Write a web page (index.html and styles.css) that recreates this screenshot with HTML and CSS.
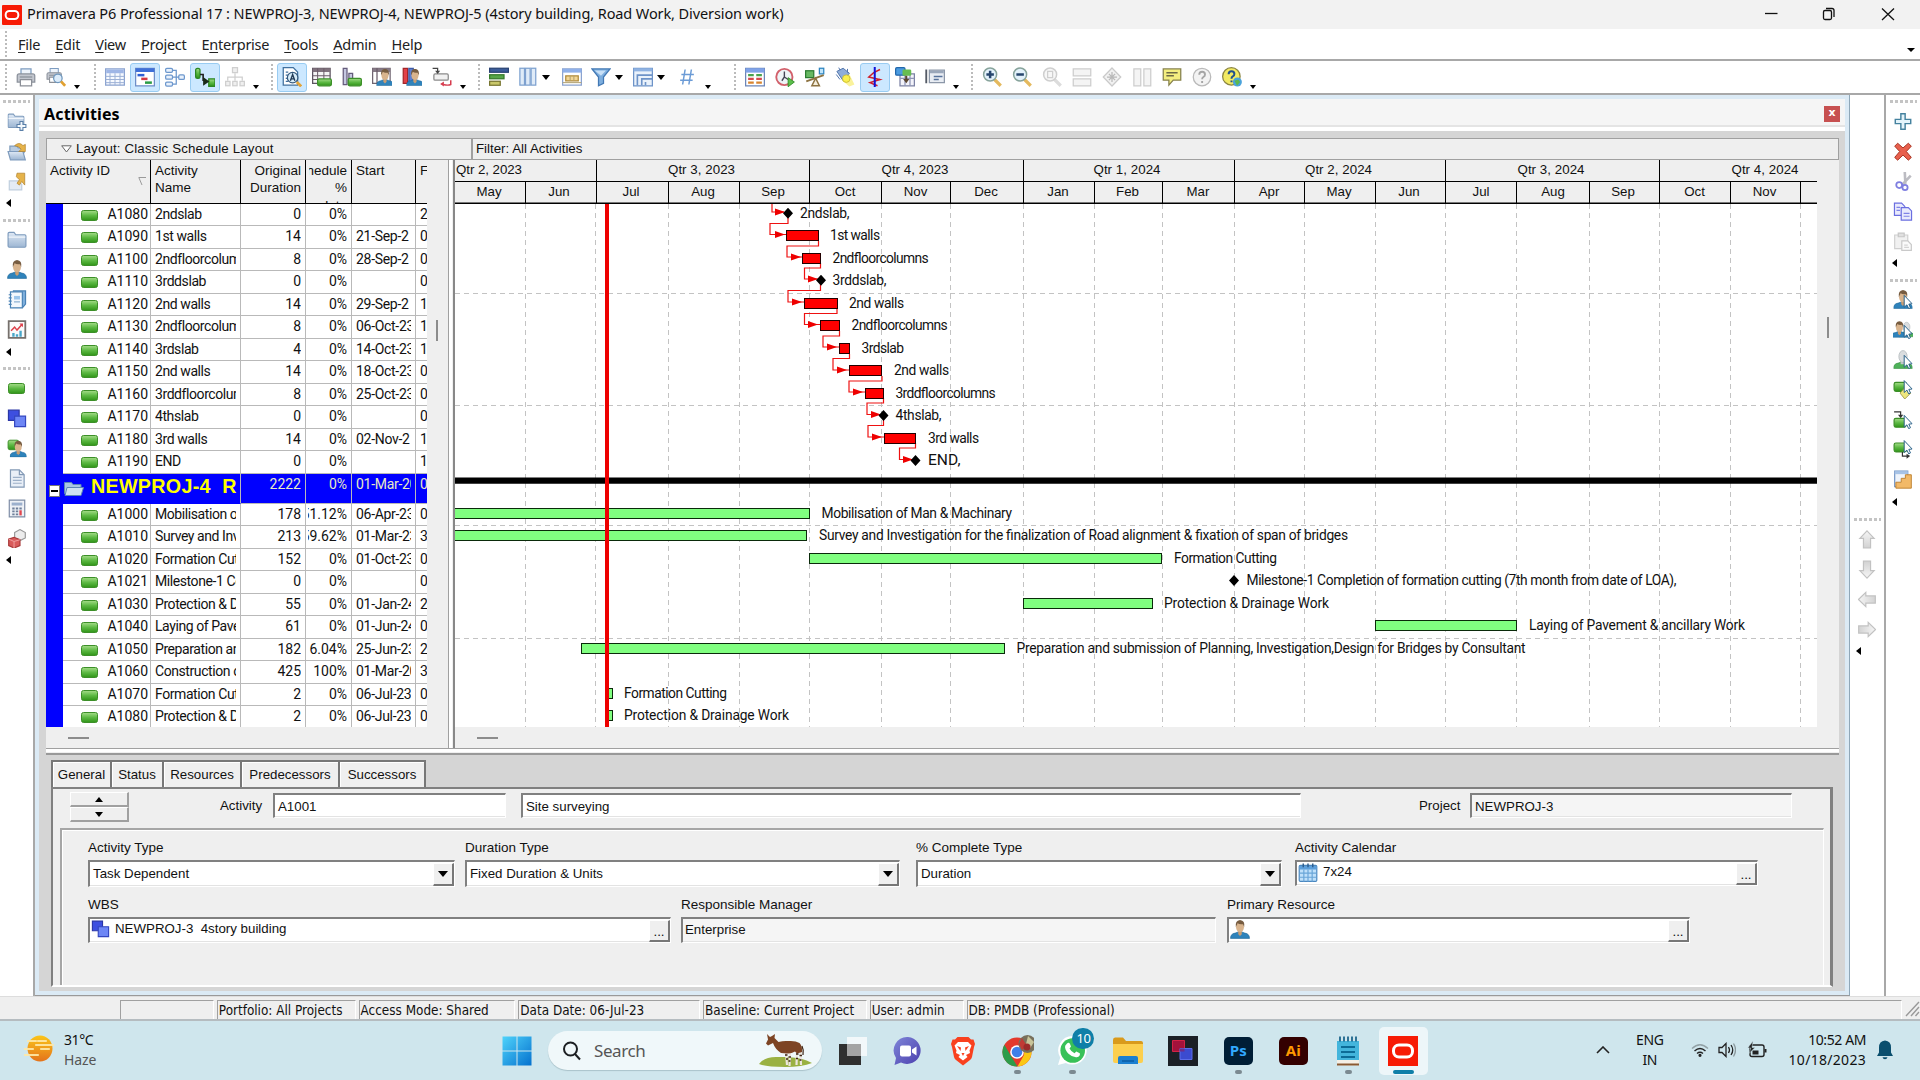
FILE: index.html
```html
<!DOCTYPE html>
<html lang="en">
<head>
<meta charset="utf-8">
<title>Primavera P6 Professional 17</title>
<link rel="stylesheet" href="styles.css">
</head>
<body>
<svg class="defs" width="0" height="0" aria-hidden="true">
<defs>
<linearGradient id="g-green" x1="0" y1="0" x2="0" y2="1"><stop offset="0" stop-color="#a6dd8a"/><stop offset=".5" stop-color="#5db944"/><stop offset="1" stop-color="#2f9417"/></linearGradient>
<linearGradient id="g-fold" x1="0" y1="0" x2="0" y2="1"><stop offset="0" stop-color="#dfe9f5"/><stop offset="1" stop-color="#9db6d3"/></linearGradient>
<linearGradient id="g-gray" x1="0" y1="0" x2="0" y2="1"><stop offset="0" stop-color="#f6f6f6"/><stop offset="1" stop-color="#d2d2d2"/></linearGradient>
<linearGradient id="g-win" x1="0" y1="0" x2="1" y2="1"><stop offset="0" stop-color="#4fd3fb"/><stop offset="1" stop-color="#0571ce"/></linearGradient>
<linearGradient id="g-sun" x1="0" y1="0" x2="0" y2="1"><stop offset="0" stop-color="#fbc51a"/><stop offset="1" stop-color="#e4731b"/></linearGradient>
<linearGradient id="g-chat" x1="0" y1="0" x2="1" y2="1"><stop offset="0" stop-color="#7f86d8"/><stop offset="1" stop-color="#4b3fae"/></linearGradient>
</defs>
<symbol id="i-act" viewBox="0 0 17 11"><rect x=".5" y=".5" width="16" height="10" rx="2" fill="url(#g-green)" stroke="#3c8f28"/></symbol>
<symbol id="i-head" viewBox="0 0 16 16"><path d="M0 15.500q0-4 4-4.500l2.500-1h3l2.500 1q4 .5 4 4.500z" fill="#2f83bb" stroke="#1d6697" stroke-width=".5"/><path d="M6.500 9h3v3l-1.500 1.500-1.500-1.500z" fill="#c99d72"/><ellipse cx="8" cy="6" rx="3.300" ry="4.300" fill="#d9b48d"/><path d="M4.500 6q-.8-5.500 3.500-6 4.500.5 3.500 6l-1-2.500q-3 .5-4.500-.8z" fill="#775c40"/></symbol>
<symbol id="i-ghost" viewBox="0 0 16 16"><path d="M0 15.500q0-4 4-4.500l2.500-1h3l2.500 1q4 .5 4 4.500z" fill="#4fb25a" stroke="#2d8a3a" stroke-width=".5"/><path d="M6 9h4v3H6z" fill="#c3c8cb"/><ellipse cx="8" cy="5.500" rx="3.500" ry="5" fill="#dadddf" stroke="#aeb4b8" stroke-width=".6"/></symbol>
<symbol id="i-cursor" viewBox="0 0 16 16"><path d="M9 4.500v10l2.300-2 1.500 3.200 1.500-.8-1.400-3 2.800-.3z" fill="#fff" stroke="#235d86" stroke-width=".8"/></symbol>
<symbol id="i-print" viewBox="0 0 16 16"><path d="M4 1.500h8V7H4z" fill="#eef4fb" stroke="#7d9cc0"/><path d="M1 7q0-1.500 1.500-1.500h11Q15 5.500 15 7v5H1z" fill="#c2c6ce" stroke="#8b919b"/><path d="M3.500 10h9v5h-9z" fill="#fff" stroke="#8b8f97"/><path d="M3 8h10" stroke="#8a9098"/></symbol>
<symbol id="i-preview" viewBox="0 0 16 16"><g transform="scale(.82)"><use href="#i-print" width="16" height="16"/></g><circle cx="9.500" cy="9" r="3.400" fill="#dcecfa" stroke="#6f97bd"/><path d="M12 11.500l3.300 3.500" stroke="#e0a030" stroke-width="2.200"/></symbol>
<symbol id="i-grid" viewBox="0 0 16 16"><path d="M.5 1.500h15v13H.5z" fill="#f7faff" stroke="#8ba3d0"/><path d="M1 2h14v3H1z" fill="#9fb6e6"/><path d="M.5 7.500h15M.5 10h15M.5 12.500h15M4 5v9.500M8 5v9.500M12 5v9.500" stroke="#9db1d6" stroke-width=".8"/></symbol>
<symbol id="i-gantt" viewBox="0 0 16 16"><path d="M.5 1h15v14H.5z" fill="#fff" stroke="#6f8ec8"/><path d="M.5 1h15v3H.5z" fill="#3f70d8"/><path d="M2 6.500h5.500" stroke="#2d5fd3" stroke-width="2"/><path d="M5 9.500h5" stroke="#d33845" stroke-width="2"/><path d="M8 12.500h5.500" stroke="#2b9c45" stroke-width="2"/></symbol>
<symbol id="i-net" viewBox="0 0 16 16"><g fill="#e9f1fb" stroke="#6c97cd"><rect x=".5" y="1" width="5.500" height="3.200" rx="1"/><rect x=".5" y="6.500" width="5.500" height="3.200" rx="1"/><rect x=".5" y="12" width="5.500" height="3.200" rx="1"/><rect x="11" y="6.300" width="4.500" height="3.600" rx="1"/></g><path d="M6 2.600h3v5.500h2M6 8.100h5M6 13.600h3V8" fill="none" stroke="#6c97cd"/></symbol>
<symbol id="i-link" viewBox="0 0 16 16"><rect x=".5" y="1" width="3.500" height="8" rx="1.500" fill="url(#g-green)" stroke="#2c8622"/><rect x="11" y="9.500" width="5" height="6" fill="url(#g-green)" stroke="#2c8622"/><path d="M4 6h2.500v4.500H8" fill="none" stroke="#222" stroke-width="1.300"/><path d="M6.500 8l5 3.500-5 3.500z" fill="#1a2a1a"/></symbol>
<symbol id="i-tree" viewBox="0 0 16 16"><g fill="#efefef" stroke="#cfcfcf"><rect x="6" y=".5" width="4" height="4"/><rect x=".5" y="11.500" width="3.500" height="3.500"/><rect x="6.200" y="11.500" width="3.500" height="3.500"/><rect x="12" y="11.500" width="3.500" height="3.500"/></g><path d="M8 5v6M2.200 11V8h11.600v3" fill="none" stroke="#cfcfcf"/></symbol>
<symbol id="i-docfind" viewBox="0 0 16 16"><path d="M1 .5h8l3.500 3.500v10.500H1z" fill="#fff" stroke="#40709f"/><path d="M3 4h2M3 6.500h2M3 9h2M3 11.500h2" stroke="#40709f"/><circle cx="8.500" cy="8.500" r="4.200" fill="#d8edf9" stroke="#365a7e"/><path d="M6.700 11l1.800-5 1.800 5M7.300 9.500h2.400" fill="none" stroke="#223a55" stroke-width="1.100"/><path d="M11.800 12l3.500 3.500" stroke="#e2a43a" stroke-width="2.200"/></symbol>
<symbol id="i-tbl-green" viewBox="0 0 16 16"><path d="M.5 1h14v12H.5z" fill="#f5f5f5" stroke="#5c5460"/><path d="M.5 1h14v3H.5z" fill="#80727d"/><path d="M4.500 1v12M9.500 1v12M.5 7h14M.5 10h14" stroke="#6b5c68" stroke-width=".8"/><rect x="4.500" y="9.500" width="11" height="5.500" rx="1.200" fill="url(#g-green)" stroke="#3c8f28"/></symbol>
<symbol id="i-bars-green" viewBox="0 0 16 16"><path d="M1 1h3v13H1zM5.500 5h3v9h-3z" fill="#c5c7e0" stroke="#655c7c"/><rect x="5" y="9" width="10.500" height="6" rx="1.200" fill="url(#g-green)" stroke="#3c8f28"/></symbol>
<symbol id="i-tbl-head" viewBox="0 0 16 16"><path d="M.5 1h14v12H.5z" fill="#fff" stroke="#6f6470"/><path d="M.5 1h14v3H.5z" fill="#867a86"/><path d="M4 1v12" stroke="#6b5c68"/><g transform="translate(3.500 1.500) scale(.86)"><use href="#i-head" width="16" height="16"/></g></symbol>
<symbol id="i-bar-head" viewBox="0 0 16 16"><path d="M1 1h3.500v12H1z" fill="#e24148" stroke="#a32529"/><path d="M5.500 1h3.500v12H5.500z" fill="#5f80cf" stroke="#3d5aa6"/><g transform="translate(3.500 1.500) scale(.86)"><use href="#i-head" width="16" height="16"/></g></symbol>
<symbol id="i-relate" viewBox="0 0 16 16"><rect x="1.500" y="5.500" width="11.500" height="5" rx="1" fill="#f1f1f1" stroke="#8a8a8a"/><path d="M.5 1h4v3" fill="none" stroke="#444"/><path d="M2.500 3h4L4.500 5.500z" fill="#444"/><path d="M15 10.500v3.500q-2 1-6 0" fill="none" stroke="#d63c4e" stroke-width="1.200"/><path d="M6.500 13.500l3-2v4z" fill="#d63c4e"/></symbol>
<symbol id="i-barlist" viewBox="0 0 16 16"><rect x=".5" y="1" width="15" height="3.200" fill="#3c5c99" stroke="#2a4273"/><rect x=".5" y="6.200" width="11.500" height="3.200" fill="#57a548" stroke="#367a2b"/><rect x=".5" y="11.400" width="8.500" height="3.200" fill="#c9c76a" stroke="#77752f"/></symbol>
<symbol id="i-cols" viewBox="0 0 16 16"><g fill="#dfebf8" stroke="#7ea1cf"><rect x="1.500" y="1" width="3.700" height="13.500"/><rect x="6" y="1" width="3.700" height="13.500"/><rect x="10.500" y="1" width="3.700" height="13.500"/></g></symbol>
<symbol id="i-window" viewBox="0 0 16 16"><path d="M.5 1.500h15v13H.5z" fill="#fff" stroke="#8ba3d0"/><path d="M.5 1.500h15v3H.5z" fill="#8fb0ea"/><path d="M3 7h10v4H3z" fill="#f3d695" stroke="#b08b3c"/><path d="M6.500 7v4M9.500 7v4M.5 12.500h15" stroke="#b0a070" stroke-width=".8"/></symbol>
<symbol id="i-funnel" viewBox="0 0 16 16"><path d="M.8 1.500h14.400L10 8v5l-4 2V8z" fill="#7daede" stroke="#4278b4"/><path d="M3 2.700h9L8 7z" fill="#c8e0f7"/></symbol>
<symbol id="i-group" viewBox="0 0 16 16"><path d="M.5 1h15v14H.5z" fill="#eaf2fb" stroke="#6d93c8"/><path d="M.5 1h15v2.500H.5z" fill="#8fb2e2"/><path d="M3.500 14.500v-8h12M7 14.500v-5h8.500M10 14.500V12" fill="none" stroke="#6d93c8" stroke-width="1.300"/></symbol>
<symbol id="i-hash" viewBox="0 0 16 16"><path d="M6.500 2l-2 12M11.500 2l-2 12M3.500 6h10M2.500 10.500h10" stroke="#6b9bd6" stroke-width="1.200"/></symbol>
<symbol id="i-sheet" viewBox="0 0 16 16"><path d="M.5 1h15v14H.5z" fill="#fff" stroke="#6d86b8"/><path d="M.5 1h15v3.500H.5z" fill="#7fa2e8"/><path d="M2.500 6.500h4.500M9 6.500h4.500" stroke="#49a24f" stroke-width="1.800"/><path d="M2.500 9.500h4.500M9 9.500h4.500" stroke="#d5484e" stroke-width="1.800"/><path d="M2.500 12.500h4.500M9 12.500h4.500" stroke="#d8842f" stroke-width="1.800"/></symbol>
<symbol id="i-clock" viewBox="0 0 16 16"><circle cx="7.500" cy="8" r="6.500" fill="#eef4f7" stroke="#d2606b" stroke-width="1.500"/><path d="M7.500 3.500V8l-2 3M7.500 8l3 2" fill="none" stroke="#445" stroke-width="1.100"/><path d="M10.500 8.500l5 3.500-5 3.800z" fill="#5cbf4c" stroke="#2f8a25" stroke-width=".7"/></symbol>
<symbol id="i-level" viewBox="0 0 16 16"><rect x=".5" y="3" width="6.500" height="5.500" fill="#67b862" stroke="#2c7c31"/><rect x="11.500" y="1" width="3.500" height="4.500" fill="#bfe4fa" stroke="#2d84c0"/><path d="M1 11.500l14-5" stroke="#8d7342" stroke-width="1.500"/><path d="M8.500 9l-3 6h6z" fill="#f4eedc" stroke="#8d7342" stroke-width="1.200"/></symbol>
<symbol id="i-spot" viewBox="0 0 16 16"><path d="M1.500 3.500l5-2.500 5 4-5 6z" fill="#8fadd8" stroke="#5477ad" stroke-width=".8"/><path d="M3 .5l1 2M1 6l3 4M10 1.500v3" stroke="#5477ad" stroke-width=".8"/><path d="M6 11l5.500-5.500 4 8.500-4 1.500z" fill="#faf29b"/><circle cx="9" cy="9.300" r="3" fill="#fbf04e" stroke="#c9bb32" stroke-width=".7"/></symbol>
<symbol id="i-progress" viewBox="0 0 16 16"><path d="M12 2L7 4.500 3 8l9 2-8 2.500 6 2.500" fill="none" stroke="#d0202c" stroke-width="1.200"/><path d="M7.800 0v16" stroke="#1212d8" stroke-width="1.600"/></symbol>
<symbol id="i-update" viewBox="0 0 16 16"><path d="M4 5.500h11.500V15H4z" fill="#f3f3fa" stroke="#7c82a4"/><path d="M4 9h11.500M8 5.500V15M12 5.500V15" stroke="#8f95b6"/><rect x=".5" y=".5" width="7.500" height="6" rx="1" fill="#4b9be0" stroke="#2267ab"/><rect x="6" y="2" width="7" height="5" rx="1" fill="#67bd51"/><path d="M9 7v3" stroke="#5b4730" stroke-width="1.600"/><path d="M6.500 9.500h5L9 13z" fill="#5b4730"/></symbol>
<symbol id="i-bartext" viewBox="0 0 16 16"><path d="M1 2v11" stroke="#555b66" stroke-width="1.500"/><path d="M3.500 2.500h12v10h-12z" fill="#e9edf3" stroke="#8c97a8"/><path d="M4 3h11v2H4z" fill="#9aa7ba"/><path d="M7 7.500h7M7 10h4" stroke="#58739c" stroke-width="1.200"/></symbol>
<symbol id="i-lens" viewBox="0 0 16 16"><path d="M10 10l5 5" stroke="#e4b95e" stroke-width="2.600"/><circle cx="6.500" cy="6" r="5.200" fill="#e3f2fb" stroke="#87a39b" stroke-width="1.200"/></symbol>
<symbol id="i-zin" viewBox="0 0 16 16"><use href="#i-lens" width="16" height="16"/><path d="M3.500 6h6M6.500 3v6" stroke="#26466d" stroke-width="2"/></symbol>
<symbol id="i-zout" viewBox="0 0 16 16"><use href="#i-lens" width="16" height="16"/><path d="M3.500 6h6" stroke="#26466d" stroke-width="2"/></symbol>
<symbol id="i-zfit" viewBox="0 0 16 16"><path d="M10 10l5 5" stroke="#dcdcdc" stroke-width="2.600"/><circle cx="6.500" cy="6" r="5.200" fill="#f7f7f7" stroke="#cfcfcf" stroke-width="1.200"/><path d="M4.500 3.500h4v5h-4z" fill="none" stroke="#cfcfcf"/></symbol>
<symbol id="i-rows2" viewBox="0 0 16 16"><path d="M1 1.500h14V7H1zM1 9.500h14V15H1z" fill="#f4f4f4" stroke="#cdcdcd"/></symbol>
<symbol id="i-diam" viewBox="0 0 16 16"><path d="M8 .8L15 8l-7 7.200L1 8z" fill="#f1f1f1" stroke="#cacaca"/><path d="M8 4v8M4 8h8M5.500 5.500l5 5M10.500 5.500l-5 5" stroke="#b9b9b9"/></symbol>
<symbol id="i-cols2" viewBox="0 0 16 16"><path d="M1.500 1.500H7V15H1.500zM9.500 1.500H15V15H9.500z" fill="#f4f4f4" stroke="#cdcdcd"/></symbol>
<symbol id="i-note" viewBox="0 0 16 16"><path d="M1 1.500h14v9H9l-3.500 4v-4H1z" fill="#f3ee7f" stroke="#86814e"/><path d="M3.500 4.500h9M3.500 7h6" stroke="#6d6a45" stroke-width="1.200"/></symbol>
<symbol id="i-help0" viewBox="0 0 16 16"><circle cx="8" cy="8" r="7" fill="#f3f3f3" stroke="#b9b9b9"/><path d="M5.800 6.200q0-2.400 2.300-2.400t2.300 2.200q0 1.300-1.300 2-1 .6-1 1.800M8.100 11.200v1.500" fill="none" stroke="#a5a5a5" stroke-width="1.500"/></symbol>
<symbol id="i-help1" viewBox="0 0 16 16"><circle cx="7.500" cy="7.500" r="7" fill="#f2ea62" stroke="#8b8540"/><path d="M5.300 5.700q0-2.400 2.300-2.400t2.300 2.200q0 1.300-1.300 2-1 .6-1 1.800M7.600 10.700v1.500" fill="none" stroke="#22508c" stroke-width="1.600"/><circle cx="12.300" cy="12" r="3.600" fill="#4aa3dc"/><path d="M10 11l3-1 1.500 2-2.500 3z" fill="#5cb84f"/></symbol>
<symbol id="i-folder" viewBox="0 0 16 16"><path d="M.5 3q0-1 1-1h4l1.500 2h7.500q1 0 1 1v8.500q0 1-1 1h-13q-1 0-1-1z" fill="url(#g-fold)" stroke="#7e9bbd"/><path d="M1 6h14" stroke="#f1f6fb"/></symbol>
<symbol id="i-fplus" viewBox="0 0 16 16"><g transform="scale(.9)"><use href="#i-folder" width="16" height="16"/></g><path d="M10.500 8h2.500v2.500h2.500V13H13v2.500h-2.500V13H8v-2.500h2.500z" fill="#f4f9fd" stroke="#5a7fa8" stroke-width=".9"/></symbol>
<symbol id="i-fopen" viewBox="0 0 16 16"><path d="M2 3.500h6L9 5h5v4H2z" fill="#b9cce1" stroke="#7e9bbd"/><path d="M.5 8H13l2 7H2.500z" fill="url(#g-fold)" stroke="#7e9bbd"/><path d="M6 3q4-3.500 7 0l2-1v6h-5.500L11.500 6Q9.500 3.500 6 3z" fill="#e6b34a" stroke="#b0822c" stroke-width=".6"/></symbol>
<symbol id="i-fclose" viewBox="0 0 16 16"><path d="M1.500 7.500H9l3 3V15h-10.500z" fill="#e4ebf4" stroke="#c0cede"/><path d="M8 1h6.500v10l-2.500-3-2 3-2-1.500 2-3L7.500 4z" fill="#e6b34a" stroke="#b0822c" stroke-width=".6"/></symbol>
<symbol id="i-book" viewBox="0 0 16 16"><path d="M5 .8h10.200v11L13 14.500H5z" fill="#7fb0dd" stroke="#4a82b5"/><path d="M2.500 1.500h10v13.500h-10z" fill="#f3f8fd" stroke="#4a82b5"/><path d="M1 4h2.500M1 6.700h2.500M1 9.400h2.500M1 12.100h2.500" stroke="#4a82b5"/><path d="M5.500 5h5v3h-5z" fill="#9cc6ec"/><path d="M5.500 10h5" stroke="#88aed0"/></symbol>
<symbol id="i-chart" viewBox="0 0 16 16"><path d="M1 1h14v14H1z" fill="#fbfbfb" stroke="#76706c" stroke-width="1.500"/><path d="M4 14v-3h2v3zM7 14v-2h2v2zM10 14V9h2v5z" fill="#49a7c9"/><path d="M3 9l3-3 2 2.500L12 4" fill="none" stroke="#dd3f49" stroke-width="1.200"/><path d="M10 3h3v3z" fill="#dd3f49"/></symbol>
<symbol id="i-wbs" viewBox="0 0 16 16"><path d="M.8 1h9v8.500h-9z" fill="#3d4fe0" stroke="#2a36a6"/><path d="M6 6h9.200v8.800H6z" fill="#6d86f5" stroke="#3346c0"/></symbol>
<symbol id="i-acthead" viewBox="0 0 16 16"><rect x=".5" y="1" width="9" height="8" rx="1.500" fill="url(#g-green)" stroke="#3c8f28" stroke-width=".8"/><g transform="translate(2 1.500) scale(.88)"><use href="#i-head" width="16" height="16"/></g></symbol>
<symbol id="i-page" viewBox="0 0 16 16"><path d="M2.500.8h7.500l4 4v10.400H2.500z" fill="#e9eff7" stroke="#8299b5"/><path d="M10 .8v4h4" fill="none" stroke="#8299b5"/><path d="M4.500 7h7.500M4.500 9.500h7.500M4.500 12h7.500" stroke="#9db0c8"/></symbol>
<symbol id="i-calc" viewBox="0 0 16 16"><path d="M1.500 1h13v14h-13z" fill="#eef1f6" stroke="#7e8da5"/><path d="M3.500 3h9v2.500h-9z" fill="#9cb0cd"/><path d="M4 8h2M7 8h2M10 8h2M4 10.500h2M7 10.500h2M4 13h2M7 13h2" stroke="#6e7f99" stroke-width="1.500"/><path d="M11 9.500v4.300" stroke="#e0474f" stroke-width="2"/></symbol>
<symbol id="i-dice" viewBox="0 0 16 16"><path d="M6 3l4.500-2.500L15 3v4.500l-4 2L6 8z" fill="#ececec" stroke="#999"/><path d="M1 8.500L5.500 7l5 2v5l-5 2-4.500-2z" fill="#d95b5b" stroke="#a93a3a"/><path d="M1 8.500l4.500 2 5-1.500M5.500 10.500V16" fill="none" stroke="#f0a0a0" stroke-width=".8"/></symbol>
<symbol id="i-plus" viewBox="0 0 16 16"><path d="M6.200 1.500h3.600v4.700h4.700v3.600H9.800v4.700H6.200V9.800H1.500V6.200h4.700z" fill="#e4f4fb" stroke="#45829f" stroke-width="1.200"/></symbol>
<symbol id="i-del" viewBox="0 0 16 16"><path d="M3.500 1L8 5l4.500-4L15 3.500 10.800 8l4.200 5-2.500 2.300L8 11l-4.500 4.300L1 13l4.200-5L1 3.500z" fill="#e8604d" stroke="#a5301f" stroke-width=".8"/></symbol>
<symbol id="i-cut" viewBox="0 0 16 16"><path d="M9.500 0L10 10M14.500 3L7 11" stroke="#bcbcc2" stroke-width="2.200"/><circle cx="4.800" cy="11" r="2.500" fill="none" stroke="#7f7fe0" stroke-width="1.500"/><circle cx="9.700" cy="13" r="2.200" fill="none" stroke="#7f7fe0" stroke-width="1.500"/></symbol>
<symbol id="i-copy" viewBox="0 0 16 16"><path d="M.8 1h6l2.700 2.700v7.500H.8z" fill="#e9eafc" stroke="#6a6ee0"/><path d="M6.500 4.800h6l2.700 2.700v7.700H6.500z" fill="#e9eafc" stroke="#6a6ee0"/><path d="M2.500 4.500h3M2.500 7h3M8.500 9.500h5M8.500 12h5" stroke="#7f83e6"/></symbol>
<symbol id="i-paste" viewBox="0 0 16 16"><path d="M1 2.500h11V14H1z" fill="#f1f1f1" stroke="#cfcfcf"/><path d="M4 1h5v3H4z" fill="#e0e0e0" stroke="#c6c6c6"/><path d="M7 7.500h5l3 3v5H7z" fill="#fafafa" stroke="#c9c9c9"/><path d="M9 11h3M9 13h4" stroke="#d3d3d3"/></symbol>
<symbol id="i-r1" viewBox="0 0 16 16"><use href="#i-head" width="16" height="16"/><use href="#i-cursor" width="16" height="16"/></symbol>
<symbol id="i-r2" viewBox="0 0 16 16"><g transform="translate(4.500 0)"><use href="#i-ghost" width="13" height="16"/></g><g transform="translate(-2 0)"><use href="#i-head" width="14" height="16"/></g><use href="#i-cursor" width="16" height="16"/></symbol>
<symbol id="i-r3" viewBox="0 0 16 16"><use href="#i-ghost" width="16" height="16"/><use href="#i-cursor" width="16" height="16"/></symbol>
<symbol id="i-r4" viewBox="0 0 16 16"><rect x=".5" y="2" width="10.500" height="7.500" rx="1.500" fill="url(#g-green)" stroke="#3c8f28"/><path d="M9.500 6.500l5 4.500-5 5-4-5z" fill="#eee77e" stroke="#9c9540" stroke-width=".7"/><g transform="translate(0 -4)"><use href="#i-cursor" width="16" height="16"/></g></symbol>
<symbol id="i-r5" viewBox="0 0 16 16"><path d="M.5 1.500h5.500V5" fill="none" stroke="#333"/><path d="M3.800 4h4.400L6 7z" fill="#333"/><rect x=".5" y="7" width="10" height="7.500" rx="1.500" fill="url(#g-green)" stroke="#3c8f28"/><use href="#i-cursor" width="16" height="16"/></symbol>
<symbol id="i-r6" viewBox="0 0 16 16"><rect x=".5" y="2.500" width="10.500" height="7.500" rx="1.500" fill="url(#g-green)" stroke="#3c8f28"/><path d="M7.500 10v3.500h4" fill="none" stroke="#333"/><path d="M11 11.500l3 2-3 2.300z" fill="#333"/><g transform="translate(0 -4)"><use href="#i-cursor" width="16" height="16"/></g></symbol>
<symbol id="i-steps" viewBox="0 0 16 16"><path d="M1 1h11v13H1z" fill="#eff4fb" stroke="#6f93c4"/><path d="M1 1h11v2.500H1z" fill="#a7c3e6"/><path d="M2 15.300v-5h4.500V7H10V4h5v11.300z" fill="#f2b968" stroke="#bf8230" stroke-width=".8"/></symbol>
<symbol id="i-up" viewBox="0 0 16 16"><path d="M8 .8l6 6.200h-3v8H5V7H2z" fill="url(#g-gray)" stroke="#c2c2c2"/></symbol>
<symbol id="i-cal" viewBox="0 0 16 16"><rect x=".6" y="2" width="14.800" height="13.500" rx="1" fill="#bfe0fa" stroke="#4a87bf"/><path d="M1 2.500h14v3H1z" fill="#5c9fdb"/><path d="M4.500 5.500v10M8 5.500v10M11.500 5.500v10M1 8.500h14M1 12h14" stroke="#6aa5d8"/><path d="M4 .5v3M8 .5v3M12 .5v3" stroke="#2c5c8c" stroke-width="1.200"/></symbol>
<symbol id="i-ora" viewBox="0 0 30 30"><path d="M0 0h30v30H0z" fill="#f71b05"/><rect x="5.500" y="9" width="19" height="12" rx="5.500" fill="none" stroke="#fff" stroke-width="3"/></symbol>
</svg>

<header class="titlebar">
<svg class="app-icon"><use href="#i-ora"/></svg>
<span class="title-text">Primavera P6 Professional 17 : NEWPROJ-3, NEWPROJ-4, NEWPROJ-5 (4story building, Road Work, Diversion work)</span>
<svg class="win-buttons" viewBox="0 0 140 29" fill="none" stroke="#111" stroke-width="1.300"><path d="M5 13.500h12.500"/><rect x="63.500" y="10.500" width="8" height="9" rx="1.500"/><path d="M66 8.500h6q2 0 2 2v6.500"/><path d="M122 8.500l12 11.500M134 8.500l-12 11.500"/></svg>
</header>
<nav class="menubar">
<i class="grip"></i>
<span><u>F</u>ile</span><span><u>E</u>dit</span><span><u>V</u>iew</span><span><u>P</u>roject</span><span>E<u>n</u>terprise</span><span><u>T</u>ools</span><span><u>A</u>dmin</span><span><u>H</u>elp</span>
<i class="drop menu-drop"></i>
</nav>
<div class="toolbar">
<i class="grip first"></i>
<b class="ic"><svg><use href="#i-print"/></svg></b><b class="ic"><svg><use href="#i-preview"/></svg></b><i class="more"></i>
<i class="grip second"></i>
<b class="ic"><svg><use href="#i-grid"/></svg></b><b class="ic on"><svg><use href="#i-gantt"/></svg></b><b class="ic"><svg><use href="#i-net"/></svg></b><b class="ic on"><svg><use href="#i-link"/></svg></b><b class="ic"><svg><use href="#i-tree"/></svg></b><i class="more"></i>
<i class="grip"></i>
<b class="ic on"><svg><use href="#i-docfind"/></svg></b><b class="ic"><svg><use href="#i-tbl-green"/></svg></b><b class="ic"><svg><use href="#i-bars-green"/></svg></b><b class="ic"><svg><use href="#i-tbl-head"/></svg></b><b class="ic"><svg><use href="#i-bar-head"/></svg></b><b class="ic"><svg><use href="#i-relate"/></svg></b><i class="more"></i>
<i class="grip"></i>
<b class="ic"><svg><use href="#i-barlist"/></svg></b><b class="ic combo"><svg><use href="#i-cols"/></svg><i class="drop"></i></b><b class="ic"><svg><use href="#i-window"/></svg></b><b class="ic combo"><svg><use href="#i-funnel"/></svg><i class="drop"></i></b><b class="ic combo"><svg><use href="#i-group"/></svg><i class="drop"></i></b><b class="ic"><svg><use href="#i-hash"/></svg></b><i class="more"></i>
<i class="grip wide"></i>
<b class="ic"><svg><use href="#i-sheet"/></svg></b><b class="ic"><svg><use href="#i-clock"/></svg></b><b class="ic"><svg><use href="#i-level"/></svg></b><b class="ic"><svg><use href="#i-spot"/></svg></b><b class="ic on"><svg><use href="#i-progress"/></svg></b><b class="ic"><svg><use href="#i-update"/></svg></b><b class="ic"><svg><use href="#i-bartext"/></svg></b><i class="more"></i>
<i class="grip"></i>
<b class="ic"><svg><use href="#i-zin"/></svg></b><b class="ic"><svg><use href="#i-zout"/></svg></b><b class="ic"><svg><use href="#i-zfit"/></svg></b><b class="ic"><svg><use href="#i-rows2"/></svg></b><b class="ic"><svg><use href="#i-diam"/></svg></b><b class="ic"><svg><use href="#i-cols2"/></svg></b><b class="ic"><svg><use href="#i-note"/></svg></b><b class="ic"><svg><use href="#i-help0"/></svg></b><b class="ic"><svg><use href="#i-help1"/></svg></b><i class="more"></i>
</div>

<div class="main">
<aside class="side side-left">
<i class="hgrip"></i>
<b class="vi"><svg><use href="#i-fplus"/></svg></b><b class="vi"><svg><use href="#i-fopen"/></svg></b><b class="vi"><svg><use href="#i-fclose"/></svg></b><i class="tri"></i>
<i class="hgrip"></i>
<b class="vi"><svg><use href="#i-folder"/></svg></b><b class="vi"><svg><use href="#i-head"/></svg></b><b class="vi"><svg><use href="#i-book"/></svg></b><b class="vi"><svg><use href="#i-chart"/></svg></b><i class="tri"></i>
<i class="hgrip"></i>
<b class="vi"><svg class="flat"><use href="#i-act"/></svg></b><b class="vi"><svg><use href="#i-wbs"/></svg></b><b class="vi"><svg><use href="#i-acthead"/></svg></b><b class="vi"><svg><use href="#i-page"/></svg></b><b class="vi"><svg><use href="#i-calc"/></svg></b><b class="vi"><svg><use href="#i-dice"/></svg></b><i class="tri"></i>
</aside>

<section class="mdi">
<div class="mdi-title"><h1>Activities</h1><span class="mdi-close">x</span></div>
<div class="mdi-body">
<div class="layoutbar">
<div class="layout-name"><svg width="11" height="8" viewBox="0 0 11 8"><path d="M.7.800h9.600L5.500 7z" fill="#fff" stroke="#666"/></svg><span>Layout: Classic Schedule Layout</span></div>
<div class="layout-filter"><span>Filter: All Activities</span></div>
</div>
<div class="split">
<div class="table-pane">
<div class="thead">
<div class="h-id">Activity ID<svg width="8" height="9" viewBox="0 0 8 9"><path d="M8 .500H.800L4 8" fill="none" stroke="#9a9a9a"/></svg></div><div class="h-name">Activity<br>Name</div><div class="r">Original<br>Duration</div><div class="r sched"><span>Schedule<br>%<br>Complete</span></div><div>Start</div><div>Finish</div>
</div>
<div class="rows">
<div class="row"><i></i><div class="id"><svg><use href="#i-act"/></svg>A1080</div><div>2ndslab</div><div class="r">0</div><div class="r">0%</div><div></div><div>23-Sep</div></div>
<div class="row"><i></i><div class="id"><svg><use href="#i-act"/></svg>A1090</div><div>1st walls</div><div class="r">14</div><div class="r">0%</div><div>21-Sep-2</div><div>05-Oct</div></div>
<div class="row"><i></i><div class="id"><svg><use href="#i-act"/></svg>A1100</div><div>2ndfloorcolumns</div><div class="r">8</div><div class="r">0%</div><div>28-Sep-2</div><div>06-Oct</div></div>
<div class="row"><i></i><div class="id"><svg><use href="#i-act"/></svg>A1110</div><div>3rddslab</div><div class="r">0</div><div class="r">0%</div><div></div><div>06-Oct</div></div>
<div class="row"><i></i><div class="id"><svg><use href="#i-act"/></svg>A1120</div><div>2nd walls</div><div class="r">14</div><div class="r">0%</div><div>29-Sep-2</div><div>13-Oct</div></div>
<div class="row"><i></i><div class="id"><svg><use href="#i-act"/></svg>A1130</div><div>2ndfloorcolumns</div><div class="r">8</div><div class="r">0%</div><div>06-Oct-23</div><div>14-Oct</div></div>
<div class="row"><i></i><div class="id"><svg><use href="#i-act"/></svg>A1140</div><div>3rdslab</div><div class="r">4</div><div class="r">0%</div><div>14-Oct-23</div><div>18-Oct</div></div>
<div class="row"><i></i><div class="id"><svg><use href="#i-act"/></svg>A1150</div><div>2nd walls</div><div class="r">14</div><div class="r">0%</div><div>18-Oct-23</div><div>01-Nov</div></div>
<div class="row"><i></i><div class="id"><svg><use href="#i-act"/></svg>A1160</div><div>3rddfloorcolumns</div><div class="r">8</div><div class="r">0%</div><div>25-Oct-23</div><div>02-Nov</div></div>
<div class="row"><i></i><div class="id"><svg><use href="#i-act"/></svg>A1170</div><div>4thslab</div><div class="r">0</div><div class="r">0%</div><div></div><div>02-Nov</div></div>
<div class="row"><i></i><div class="id"><svg><use href="#i-act"/></svg>A1180</div><div>3rd walls</div><div class="r">14</div><div class="r">0%</div><div>02-Nov-2</div><div>16-Nov</div></div>
<div class="row"><i></i><div class="id"><svg><use href="#i-act"/></svg>A1190</div><div>END</div><div class="r">0</div><div class="r">0%</div><div></div><div>16-Nov</div></div>
<div class="row project"><div class="proj"><span class="box"></span><svg viewBox="0 0 20 17"><path d="M.5 2.500h7l1.500 2h8v9H.5z" fill="#a9c6e3" stroke="#5d86b5"/><path d="M3 7.500h16.500l-2.500 8H1z" fill="#cfe1f2" stroke="#5d86b5"/></svg><strong>NEWPROJ-4 &nbsp;R</strong></div><div class="r">2222</div><div class="r">0%</div><div>01-Mar-20</div><div>01</div></div>
<div class="row"><i></i><div class="id"><svg><use href="#i-act"/></svg>A1000</div><div>Mobilisation of</div><div class="r">178</div><div class="r">51.12%</div><div>06-Apr-23</div><div>01-Oct</div></div>
<div class="row"><i></i><div class="id"><svg><use href="#i-act"/></svg>A1010</div><div>Survey and Inv</div><div class="r">213</div><div class="r">59.62%</div><div>01-Mar-23</div><div>30-Sep</div></div>
<div class="row"><i></i><div class="id"><svg><use href="#i-act"/></svg>A1020</div><div>Formation Cutt</div><div class="r">152</div><div class="r">0%</div><div>01-Oct-23</div><div>01-Mar</div></div>
<div class="row"><i></i><div class="id"><svg><use href="#i-act"/></svg>A1021</div><div>Milestone-1 Co</div><div class="r">0</div><div class="r">0%</div><div></div><div>01-Apr</div></div>
<div class="row"><i></i><div class="id"><svg><use href="#i-act"/></svg>A1030</div><div>Protection &amp; Dr</div><div class="r">55</div><div class="r">0%</div><div>01-Jan-24</div><div>25-Feb</div></div>
<div class="row"><i></i><div class="id"><svg><use href="#i-act"/></svg>A1040</div><div>Laying of Pave</div><div class="r">61</div><div class="r">0%</div><div>01-Jun-24</div><div>01-Aug</div></div>
<div class="row"><i></i><div class="id"><svg><use href="#i-act"/></svg>A1050</div><div>Preparation and</div><div class="r">182</div><div class="r">6.04%</div><div>25-Jun-23</div><div>24-Dec</div></div>
<div class="row"><i></i><div class="id"><svg><use href="#i-act"/></svg>A1060</div><div>Construction of</div><div class="r">425</div><div class="r">100%</div><div>01-Mar-20</div><div>30-Apr</div></div>
<div class="row"><i></i><div class="id"><svg><use href="#i-act"/></svg>A1070</div><div>Formation Cutt</div><div class="r">2</div><div class="r">0%</div><div>06-Jul-23</div><div>08-Jul</div></div>
<div class="row last"><i></i><div class="id"><svg><use href="#i-act"/></svg>A1080</div><div>Protection &amp; Dr</div><div class="r">2</div><div class="r">0%</div><div>06-Jul-23</div><div>08-Jul</div></div>
</div>
<div class="hscroll"></div>
</div>
<div class="vgutter"><i></i></div>
<div class="splitter"></div>
<div class="gantt-pane">
<svg class="gantt" viewBox="455 160 1362 567" width="1362" height="567">
<path d="M455 160h1362v44H455z" fill="#efefef"/>
<g class="grid" shape-rendering="crispEdges"><path d="M525.500 204v523M595.500 204v523M668.500 204v523M739.500 204v523M809.500 204v523M881.500 204v523M950.500 204v523M1023.500 204v523M1094.500 204v523M1162.500 204v523M1234.500 204v523M1304.500 204v523M1375.500 204v523M1445.500 204v523M1516.500 204v523M1589.500 204v523M1659.500 204v523M1730.500 204v523M1800.500 204v523"/><path d="M455 293.500h1362M455 405.500h1362M455 525.500h1362M455 638.500h1362"/></g>
<path shape-rendering="crispEdges" fill="none" stroke="#000" stroke-width="1" d="M455 181h1362M596 160v43M809.500 160v43M1023.500 160v43M1234.500 160v43M1445.500 160v43M1659.500 160v43M525.500 181v22M668.500 181v22M739.500 181v22M881.500 181v22M950.500 181v22M1094.500 181v22M1162.500 181v22M1304.500 181v22M1375.500 181v22M1516.500 181v22M1589.500 181v22M1730.500 181v22M1800.500 181v22"/>
<path d="M455 202.500h1362v1.500H455z"/>
<g class="qtr"><text x="456" y="174" textLength="66">Qtr 2, 2023</text><g text-anchor="middle"><text x="701.500" y="174" textLength="67">Qtr 3, 2023</text><text x="915" y="174" textLength="67">Qtr 4, 2023</text><text x="1127" y="174" textLength="67">Qtr 1, 2024</text><text x="1338.500" y="174" textLength="67">Qtr 2, 2024</text><text x="1551" y="174" textLength="67">Qtr 3, 2024</text><text x="1765" y="174" textLength="67">Qtr 4, 2024</text>
<text x="489" y="196">May</text><text x="559" y="196">Jun</text><text x="631" y="196">Jul</text><text x="703" y="196">Aug</text><text x="773" y="196">Sep</text><text x="845" y="196">Oct</text><text x="915.500" y="196">Nov</text><text x="986" y="196">Dec</text><text x="1058" y="196">Jan</text><text x="1127.500" y="196">Feb</text><text x="1198" y="196">Mar</text><text x="1269" y="196">Apr</text><text x="1339" y="196">May</text><text x="1409" y="196">Jun</text><text x="1481" y="196">Jul</text><text x="1553" y="196">Aug</text><text x="1623" y="196">Sep</text><text x="1694.500" y="196">Oct</text><text x="1764.500" y="196">Nov</text></g></g>
<path d="M455 477.500h1362v6.300H455z"/>
<g class="links"><path d="M772 204v8h12M788 213v10.500h-18v11h16M818.500 241v5h-31.500v11h15M820.500 263v5h-16v11h16M820.500 280v10.500H788v11.500h16M837 308v5.500h-32.500v11h16M839.500 331v5h-16.500v11h16M849.500 354v4.500H833V370h16M882 376v5h-33v11h16M883.500 398v5H867v11.500h16M883.500 415v10.500H868V437h16M915.500 443v5h-16v11.500h16"/></g>
<g class="heads"><path d="M775 208.500l10 3.500-10 3.500zM775 231l10 3.500-10 3.500zM791 253.500l10 3.500-10 3.500zM808 275.500l10 3.500-10 3.500zM792 298.500l10 3.500-10 3.500zM808 321l10 3.500-10 3.500zM827 343.500l10 3.500-10 3.500zM837 366.500l10 3.500-10 3.500zM853 388.500l10 3.500-10 3.500zM871 411l10 3.500-10 3.500zM872 433.500l10 3.500-10 3.500zM903 456l10 3.500-10 3.500z"/></g>
<g class="crit" shape-rendering="crispEdges"><rect x="786.500" y="230.500" width="32" height="10"/><rect x="802.500" y="253.500" width="18" height="10"/><rect x="804.500" y="298.500" width="33" height="10"/><rect x="820.500" y="320.500" width="19" height="10"/><rect x="839.500" y="343.500" width="10" height="10"/><rect x="849.500" y="365.500" width="32" height="10"/><rect x="865.500" y="388.500" width="18" height="10"/><rect x="884.500" y="433.500" width="31" height="10"/></g>
<g class="norm" shape-rendering="crispEdges"><rect x="450.500" y="508.500" width="359" height="10"/><rect x="450.500" y="530.500" width="356" height="10"/><rect x="809.500" y="553.500" width="352" height="10"/><rect x="1023.500" y="598.500" width="129" height="10"/><rect x="1375.500" y="620.500" width="141" height="10"/><rect x="581.500" y="643.500" width="423" height="10"/><rect x="607.500" y="688.500" width="5" height="10"/><rect x="607.500" y="710.500" width="5" height="10"/></g>
<path d="M788 207.800l5 5.500-5 5.500-5-5.500zM821 274.800l5 5.500-5 5.500-5-5.500zM883.500 409.900l5 5.500-5 5.500-5-5.500zM915.500 454.900l5 5.500-5 5.500-5-5.500zM1234 575l5 5.500-5 5.500-5-5.500z"/>
<g class="lbl">
<text x="800" y="217.500" textLength="49.500">2ndslab,</text><text x="830" y="240" textLength="50">1st walls</text><text x="832.500" y="262.500" textLength="96">2ndfloorcolumns</text><text x="832.500" y="285" textLength="54">3rddslab,</text><text x="849" y="307.500" textLength="55">2nd walls</text><text x="851.500" y="330" textLength="96">2ndfloorcolumns</text><text x="861.500" y="352.500" textLength="42.500">3rdslab</text><text x="894" y="375" textLength="55">2nd walls</text><text x="895.500" y="397.500" textLength="100">3rddfloorcolumns</text><text x="895.500" y="420" textLength="46">4thslab,</text><text x="928" y="442.500" textLength="51">3rd walls</text><text x="928" y="465" textLength="32.500" lengthAdjust="spacingAndGlyphs">END,</text>
<text x="821.500" y="517.500" textLength="190.500">Mobilisation of Man &amp; Machinary</text><text x="819" y="540" textLength="529">Survey and Investigation for the finalization of Road alignment &amp; fixation of span of bridges</text><text x="1174" y="562.500" textLength="103">Formation Cutting</text><text x="1246.500" y="585" textLength="430">Milestone-1 Completion of formation cutting (7th month from date of LOA),</text><text x="1164" y="607.500" textLength="165">Protection &amp; Drainage Work</text><text x="1529" y="630" textLength="216">Laying of Pavement &amp; ancillary Work</text><text x="1016.500" y="652.500" textLength="509">Preparation and submission of Planning, Investigation,Design for Bridges by Consultant</text><text x="624" y="697.500" textLength="103">Formation Cutting</text><text x="624" y="720" textLength="165">Protection &amp; Drainage Work</text>
</g>
<path d="M605 204h4v523h-4z" fill="#ee0000"/>
</svg>
<div class="hscroll"></div>
</div>
<div class="vgutter right"><i></i></div>
</div>
<div class="hsplit"></div>

<div class="details">
<div class="tabs"><span class="t1">General</span><span class="t2">Status</span><span class="t3">Resources</span><span class="t4">Predecessors</span><span class="t5">Successors</span></div>
<div class="panel">
<div class="idrow">
<div class="spin"><b><i class="su"></i></b><b><i class="sd"></i></b></div>
<label class="l-act">Activity</label><div class="field f-id">A1001</div><div class="field f-name">Site surveying</div>
<label class="l-proj">Project</label><div class="field ro f-proj">NEWPROJ-3</div>
</div>
<div class="group">
<div class="grow">
<div class="item w1"><label>Activity Type</label><div class="field">Task Dependent<b class="btn dd"><i></i></b></div></div>
<div class="item w2"><label>Duration Type</label><div class="field">Fixed Duration &amp; Units<b class="btn dd"><i></i></b></div></div>
<div class="item w3"><label>% Complete Type</label><div class="field">Duration<b class="btn dd"><i></i></b></div></div>
<div class="item w4"><label>Activity Calendar</label><div class="field pic"><svg><use href="#i-cal"/></svg>7x24<b class="btn">...</b></div></div>
</div>
<div class="grow two">
<div class="item w5"><label>WBS</label><div class="field pic"><svg class="sm"><use href="#i-wbs"/></svg>NEWPROJ-3&nbsp; 4story building<b class="btn">...</b></div></div>
<div class="item w6"><label>Responsible Manager</label><div class="field ro">Enterprise</div></div>
<div class="item w7"><label>Primary Resource</label><div class="field pic"><svg><use href="#i-head"/></svg><b class="btn">...</b></div></div>
</div>
</div>
</div>
</div>
</div>
</section>

<aside class="movebar">
<i class="hgrip"></i><b class="vi"><svg><use href="#i-up"/></svg></b><b class="vi"><svg class="r180"><use href="#i-up"/></svg></b><b class="vi"><svg class="r270"><use href="#i-up"/></svg></b><b class="vi"><svg class="r90"><use href="#i-up"/></svg></b><i class="tri"></i>
</aside>
<aside class="side side-right">
<i class="hgrip"></i>
<b class="vi"><svg><use href="#i-plus"/></svg></b><b class="vi"><svg><use href="#i-del"/></svg></b><b class="vi"><svg><use href="#i-cut"/></svg></b><b class="vi"><svg><use href="#i-copy"/></svg></b><b class="vi"><svg><use href="#i-paste"/></svg></b><i class="tri"></i>
<i class="hgrip"></i>
<b class="vi"><svg><use href="#i-r1"/></svg></b><b class="vi"><svg><use href="#i-r2"/></svg></b><b class="vi"><svg><use href="#i-r3"/></svg></b><b class="vi"><svg><use href="#i-r4"/></svg></b><b class="vi"><svg><use href="#i-r5"/></svg></b><b class="vi"><svg><use href="#i-r6"/></svg></b><b class="vi"><svg><use href="#i-steps"/></svg></b><i class="tri"></i>
</aside>
</div>

<footer class="statusbar">
<span class="s0"></span><span class="s1">Portfolio: All Projects</span><span class="s2">Access Mode: Shared</span><span class="s3">Data Date: 06-Jul-23</span><span class="s4">Baseline: Current Project</span><span class="s5">User: admin</span><span class="s6">DB: PMDB (Professional)</span>
<svg width="15" height="17" viewBox="0 0 15 17"><path d="M1 16L14 2M6 16l8-9M10.500 16L14 12" stroke="#999" stroke-width="1.400"/></svg>
</footer>

<div class="taskbar">
<div class="weather">
<svg width="31" height="27" viewBox="0 0 31 27"><ellipse cx="16" cy="13.500" rx="12.500" ry="13" fill="url(#g-sun)"/><path d="M4 6h8M12 10h17M0 14h9M17 14h8M0 20h14M14 6h8" stroke="#ffe9a8" stroke-width="2.200" stroke-linecap="round" opacity=".9"/></svg>
<div><div>31°C</div><div class="dim">Haze</div></div>
</div>
<div class="dock">
<b class="app"><svg width="30" height="30" viewBox="0 0 30 30"><path d="M.500.500h14v14H.500zM15.500.500h14v14h-14zM.500 15.500h14v14H.500zM15.500 15.500h14v14h-14z" fill="url(#g-win)"/></svg></b>
<div class="search"><svg width="20" height="20" viewBox="0 0 20 20" fill="none" stroke="#1c1f22" stroke-width="2"><circle cx="8.500" cy="8" r="6.500"/><path d="M13 13l5 5.500"/></svg><span>Search</span>
<svg width="53" height="33" viewBox="0 0 53 33"><path d="M0 30q6-8 20-7 22-1 33 6-10 4-27 4-20 0-26-3z" fill="#9ab142"/><path d="M27 18l1 13M31 18l-.5 14M38 16l-.5 15M41.500 17l.5 14" stroke="#ece6dd" stroke-width="2.200"/><path d="M8 0l3 3 2-1 3-2-.5 4 4 4q5-1.500 10-1 7-.5 11 2 3 3 2.500 9l-5 1.500-2-2q-4 2.500-8 2l-6-.5q-6-4-8-10l-5 2.500-2-2 2-4z" fill="#7d4424"/><path d="M26 21h2.500M29.500 23h2.500M37 20h2.500M40.500 21.500h2.500M27 25h2M29.500 27h2M37 24.500h2M40.500 26h2" stroke="#3d2415" stroke-width="1.300"/><path d="M43 12q2 4 1 9" stroke="#3d2415" stroke-width="1.200" fill="none"/></svg></div>
<b class="app"><svg width="30" height="30" viewBox="0 0 30 30"><path d="M1 8h22v21H1z" fill="#2f2f2f"/><path d="M9 1h20v19H9z" fill="#fff" opacity=".72"/><path d="M9 8h14v12H9z" fill="#8d8d8d" opacity=".6"/></svg></b>
<b class="app"><svg width="30" height="30" viewBox="0 0 30 30"><path d="M15 1a13.500 13.500 0 1 1-7 25.500L1.500 29 3 22A13.500 13.500 0 0 1 15 1z" fill="url(#g-chat)"/><rect x="7" y="9.500" width="11" height="11" rx="2" fill="#fff"/><path d="M19 13.500l4.500-3v9L19 16.500z" fill="#fff"/></svg></b>
<b class="app"><svg width="26" height="30" viewBox="0 0 26 30"><path d="M7.500 1h11l2.500 2.500 2.500 0L25 8l-1 3-2 10q-.5 2-2 3l-7 5.500L6 24q-1.500-1-2-3L2 11 1 8l1.500-4.500H5z" fill="#f9411f"/><path d="M8 6h10l3.500 3.500-2 5 .5 2.500-4 2 1.500 2-4.500 3.500L8.500 21l1.500-2-4-2 .5-2.500-2-5z" fill="#fff"/><path d="M7 10l4 1.500-.5 3.500zM19 10l-4 1.500.5 3.500zM11.500 17h3L13 20z" fill="#f9411f"/></svg></b>
<b class="app run"><svg width="32" height="32" viewBox="0 0 32 32"><circle cx="15" cy="17" r="14.500" fill="#e3392c"/><path d="M2.400 9.800L9 21l6.500 10.500A14.500 14.500 0 0 1 2.400 9.800z" fill="#2d9c4a"/><path d="M15.500 31.500L22 20l.5-7.500h6.300a14.500 14.500 0 0 1-13.300 19z" fill="#fbc715"/><circle cx="15" cy="17" r="6.800" fill="#fff"/><circle cx="15" cy="17" r="5.300" fill="#3f7fe8"/><circle cx="25.500" cy="9" r="9" fill="#77705c"/><path d="M20 3l5 8-5 4-3-6z" fill="#c03a35"/><path d="M26 1l6 6-5 8-3-6z" fill="#c8c59a"/><circle cx="25" cy="12" r="3.500" fill="#9b2b2b"/></svg></b>
<b class="app run badge"><svg width="31" height="31" viewBox="0 0 31 31"><path d="M15.500 1A14.300 14.300 0 1 1 8.800 28L1 30l2.200-7.500A14.300 14.300 0 0 1 15.500 1z" fill="#fff"/><circle cx="15.700" cy="15.500" r="12.300" fill="#38c158"/><path d="M10 8.500q2-1.500 3 .5l1 2.500-1.500 2q1.500 3 5 4.800l1.800-1.800 3.500 1.800q.8 3-3 4-4 .5-8.300-3.500-4.200-4.500-3.300-8z" fill="#fff"/></svg><em>10</em></b>
<b class="app"><svg width="30" height="28" viewBox="0 0 30 28"><path d="M0 3q0-2.500 2-2.500h8l3 3.500h15q2 0 2 2v7H0z" fill="#d99a1c"/><path d="M0 7h30v17q0 2-2 2H2q-2 0-2-2z" fill="#fccf4e"/><path d="M5 27v-6q0-2 2-2h16q2 0 2 2v6z" fill="#1b7fd0"/><path d="M9 24h12" stroke="#0b5ca5" stroke-width="1.500"/></svg></b>
<b class="app"><svg width="30" height="30" viewBox="0 0 30 30"><path d="M0 0h30v30H0z" fill="#1b2026"/><path d="M4.500 4.500h12v11h-12z" fill="#a3123b" stroke="#d32245"/><path d="M12 12.500h12v11H12z" fill="#3b4bd0" stroke="#5c6ce8"/><path d="M12 12.500h4.500v3H12z" fill="#6d2d8a"/></svg></b>
<b class="app run"><span class="adobe ps">Ps</span></b>
<b class="app"><span class="adobe ai">Ai</span></b>
<b class="app run"><svg width="24" height="30" viewBox="0 0 24 30"><path d="M1 5h22v21H1z" fill="#43b5dc"/><path d="M1 24h22v4q0 1.500-1.500 1.500h-19Q1 29.500 1 28z" fill="#f4efe6"/><path d="M1 28.500h22" stroke="#8a5a34" stroke-width="2"/><path d="M5 11h14M5 16h14M5 21h14" stroke="#0c6c97" stroke-width="2"/><path d="M4 .5v5M8 .5v5M12 .5v5M16 .5v5M20 .5v5" stroke="#135e86" stroke-width="1.700"/></svg></b>
<b class="app active"><svg width="30" height="30"><use href="#i-ora"/></svg></b>
</div>
<div class="tray">
<svg width="14" height="8" viewBox="0 0 14 8"><path d="M1 7l6-6 6 6" fill="none" stroke="#222" stroke-width="1.600"/></svg>
<div class="lang"><div>ENG</div><div>IN</div></div>
<svg class="wifi" width="18" height="14" viewBox="0 0 18 14" fill="none" stroke="#222" stroke-width="1.400"><path d="M1 5.500q8-7.500 16 0" opacity=".35"/><path d="M3.500 8q5.500-5 11 0M6 10.500q3-2.500 6 0"/><circle cx="9" cy="12.300" r=".9" fill="#222"/></svg>
<svg width="18" height="16" viewBox="0 0 18 16" fill="none" stroke="#222" stroke-width="1.300"><path d="M1 5.500h3l4-4v13l-4-4H1z"/><path d="M10.500 5q2 3 0 6M13 3q3.500 5 0 10"/><path d="M15.500 1.500q4 6.500 0 13" opacity=".4"/></svg>
<svg width="20" height="18" viewBox="0 0 20 18"><rect x="3" y="4" width="14" height="11.500" rx="2" fill="none" stroke="#222" stroke-width="1.400"/><path d="M18.500 8v3.500" stroke="#222" stroke-width="2"/><path d="M5.500 9.500h6v4h-6z" fill="#222"/><path d="M6 0L.8 7h3L2 12.500 8 6.500H5z" fill="#222" stroke="#cfe6ed" stroke-width=".5"/></svg>
<div class="clock"><div>10:52 AM</div><div class="date">10/18/2023</div></div>
<svg class="bell" width="16" height="20" viewBox="0 0 16 20"><path d="M8 .5q6 .5 6 7v5l2 3.500H0l2-3.500v-5q0-6.500 6-7z" fill="#0b4f6e"/><path d="M5.500 17.300h5q-.5 2-2.500 2t-2.500-2z" fill="#0b4f6e"/></svg>
</div>
</div>
</body>
</html>
```

FILE: styles.css
```css
* { box-sizing: border-box; }
body { margin: 0; width: 1920px; height: 1080px; overflow: hidden; display: flex; flex-direction: column; background: #fff; color: #111; font: 13.3px "Liberation Sans", Arial, sans-serif; white-space: nowrap; }
i, b, em { font-style: normal; font-weight: normal; }
.defs { position: absolute; }

/* title and menu */
.titlebar { height: 29px; flex: none; background: #f2f2f2; display: flex; align-items: center; padding-left: 2px; font: 14.5px/19px "Noto Sans", sans-serif; }
.app-icon { width: 20px; height: 20px; border-radius: 1px; margin-right: 5px; }
.title-text { letter-spacing: -0.1px; padding-bottom: 2px; }
.win-buttons { width: 140px; height: 29px; margin-left: auto; margin-right: 20px; }
.menubar { height: 32px; flex: none; display: flex; align-items: center; border-bottom: 2px solid #a8a8a8; font: 14.5px "Noto Sans", sans-serif; gap: 15px; padding-left: 5px; letter-spacing: -0.25px; color: #222; }
.menubar u { text-underline-offset: 2px; }
.menubar .grip { margin-right: -4px; }
.grip { width: 2px; height: 26px; flex: none; background: repeating-linear-gradient(#bbb 0 2px, transparent 2px 4px); }
.drop { width: 0; height: 0; border: 4px solid transparent; border-top: 5px solid #000; border-bottom: 0; }
.menu-drop { margin: 12px 5px 0 auto; border-width: 4px 4px 0; }

/* toolbar */
.toolbar { height: 34px; flex: none; display: flex; align-items: center; border-bottom: 2px solid #a8a8a8; }
.toolbar .grip { margin: 0 4px 0 7px; }
.toolbar .grip.first { margin: 0 4px 0 5px; }
.toolbar .grip.second { margin-left: 9px; }
.toolbar .grip.wide { margin: 0 4px 0 18px; }
.more { width: 14px; height: 28px; flex: none; display: flex; }
.more::after { content: ""; margin: 22px 0 0 3px; height: 0; width: 0; border: 3.5px solid transparent; border-top: 4px solid #000; border-bottom: 0; }
.ic { width: 30px; height: 29px; flex: none; display: flex; align-items: center; justify-content: center; }
.ic svg { width: 20px; height: 20px; flex: none; }
.ic.on { background: #cce8ff; border: 1px solid #99ccf2; border-radius: 3px; }
.ic.combo { width: 42.5px; justify-content: flex-start; padding-left: 4px; gap: 4px; }

/* side bars */
.main { flex: 1; display: flex; min-height: 0; }
.side, .movebar { flex: none; display: flex; flex-direction: column; align-items: center; background: #fff; }
.side-left { width: 35px; border-right: 2px solid #a8a8a8; }
.side-right { width: 36px; border-left: 2px solid #a8a8a8; }
.movebar { width: 34px; padding-top: 418px; }
.hgrip { width: 27px; height: 3px; flex: none; margin: 5px 0 3px; background: repeating-linear-gradient(90deg, #c4c4c4 0 3px, transparent 3px 5px); }
.vi { height: 30px; width: 100%; flex: none; display: flex; align-items: center; justify-content: center; }
.vi svg { width: 20px; height: 19px; }
.vi svg.flat { width: 17px; height: 11px; }
.tri { align-self: flex-start; margin: 3px 0 6.5px 6px; height: 8px; width: 0; flex: none; border: 4px solid transparent; border-right: 5px solid #000; border-left: 0; }
.r180 { transform: rotate(180deg); } .r270 { transform: rotate(-90deg); } .r90 { transform: rotate(90deg); }

/* activities window */
.mdi { width: 1815px; flex: none; padding: 4px; background: #dbeaf5; border-bottom: 1px solid #999; display: flex; flex-direction: column; border-right: 1px solid #8fa7b8; }
.mdi-title { height: 32px; flex: none; background: #f5f5f5; border-bottom: 4px solid #fff; box-shadow: inset 0 -2px #e4e4e4; display: flex; justify-content: space-between; padding: 0 5px; }
.mdi-title h1 { margin: 5px 0 0; font: bold 16px/20px "Noto Sans", sans-serif; letter-spacing: 0.15px; color: #000; }
.mdi-close { width: 16px; height: 16px; margin-top: 7px; background: #c75050; color: #fff; font: bold 11px/14px "DejaVu Sans", sans-serif; text-align: center; }
.mdi-body { flex: 1; background: #d5d5d5; padding: 7px 6px 0 7px; display: flex; flex-direction: column; }
.layoutbar { height: 22px; flex: none; display: flex; background: #efefef; border: 1px solid #a0a0a0; line-height: 20px; font-size: 13.3px; }
.layout-name { width: 426px; border-right: 2px solid #a0a0a0; padding-left: 14px; display: flex; align-items: center; gap: 4px; letter-spacing: .15px; }
.layout-filter { padding-left: 3px; }
.split { height: 588px; flex: none; display: flex; background: #efefef; }
.table-pane { width: 381px; flex: none; }
.thead { height: 43.5px; display: grid; grid-template-columns: 105px 90px 65px 46px 64px 11px; border-bottom: 1.5px solid #000; }
.thead div { border-right: 1px solid #000; padding: 1.5px 4px 0 4px; line-height: 17.5px; overflow: hidden; font-size: 13.5px; position: relative; }
.thead div:last-child { border: 0; width: 11px; }
.thead svg { position: absolute; right: 4px; top: 17px; }
.r { text-align: right; }
.thead .sched { display: flex; justify-content: flex-end; padding: 1.5px 4px 0 3px; }
.sched span { width: 38px; flex: none; overflow: hidden; display: flex; justify-content: flex-end; }
.rows { height: 523.5px; overflow: hidden; background: #fff; font: 14px "Roboto", sans-serif; }
.row { height: 22.5px; display: grid; grid-template-columns: 17px 88px 90px 65px 46px 64px 11px; line-height: 20.5px; }
.row > i { background: #00f; }
.row > div { border-right: 1px solid #b9b9b9; border-bottom: 1px solid #b9b9b9; padding: 0 4px; overflow: clip; overflow-clip-margin: content-box; display: flex; letter-spacing: -0.3px; }
.row > div:nth-child(3) { letter-spacing: -0.42px; }
.row > div:last-child { border-right: 0; padding: 0 0 0 4px; }
.row > div.r { justify-content: flex-end; letter-spacing: 0; padding: 0 4px 0 2px; }
.row > div.id { padding: 0 2px 0 18px; justify-content: space-between; overflow: hidden; letter-spacing: 0; }
.id svg { width: 17px; height: 11px; margin-top: 6px; }
.row.project { height: 30px; background: #00f; color: #e9e9c4; grid-template-columns: 195px 65px 46px 64px 11px; line-height: 21px; }
.row.project > .proj { padding: 0 2px 0 3px; align-items: flex-start; border-bottom-color: #00f; }
.proj .box { width: 11px; height: 12px; background: #fff; border: 1px solid #777; margin: 11px 4px 0 0; flex: none; display: flex; align-items: center; }
.proj .box::after { content: ""; height: 2px; width: 7px; margin: auto; background: #000; }
.proj svg { width: 20px; height: 17px; margin-top: 6px; flex: none; }
.proj strong { font: bold 19.7px/25px "Liberation Sans", Arial, sans-serif; color: #ff0; margin-left: 7px; letter-spacing: .3px; }
.hscroll { height: 21px; display: flex; align-items: center; padding-left: 22px; }
.hscroll::after { content: ""; width: 21px; height: 2px; background: #8c8c8c; }
.vgutter { width: 21px; flex: none; padding-left: 9px; }
.vgutter i { display: block; width: 2px; height: 21px; margin-top: 160px; background: #8c8c8c; }
.vgutter.right { width: 22px; padding-left: 10px; }
.vgutter.right i { margin-top: 157px; }
.splitter { width: 7px; flex: none; background: linear-gradient(90deg, #a0a0a0 0 1px, #fff 1px 4px, #efefef 4px 5px, #888 5px 7px); }
.gantt-pane { width: 1362px; flex: none; }
.gantt { display: block; background: #fff; }
.grid path { fill: none; stroke: #c3c3c3; stroke-dasharray: 5 4; }
.qtr { font: 13.3px "Liberation Sans", Arial, sans-serif; fill: #111; }
.links path { fill: none; stroke: #ee1111; stroke-width: 1.2; }
.heads path { fill: #ee0000; }
.crit rect { fill: #f00; stroke: #200; }
.norm rect { fill: #80ff80; stroke: #0a2a0a; }
.lbl { font: 13.8px "Roboto", sans-serif; fill: #111; }
.hsplit { height: 7px; flex: none; background: linear-gradient(#a0a0a0 0 1px, #fff 1px 4px, #efefef 4px 5px, #999 5px 7px); }

/* activity details */
.details { padding: 5px 6px 0 5px; }
.tabs { display: flex; height: 27px; }
.tabs span { border: 1px solid #777; border-width: 2px 2px 0 0; background: #efefef; text-align: center; line-height: 26px; box-shadow: inset 1px 1px #fff; }
.tabs .t1 { width: 61px; border-left-width: 2px; } .t2 { width: 52px; } .t3 { width: 78px; } .t4 { width: 98px; } .t5 { width: 86px; }
.panel { height: 200px; background: #efefef; border: 2px solid #808080; border-bottom: 2px solid #fff; border-right-width: 3px; padding: 3px 6px 0 7px; display: flex; flex-direction: column; }
.idrow { display: flex; height: 36px; align-items: flex-start; }
.spin { width: 59px; height: 30px; margin-left: 10px; display: flex; flex-direction: column; }
.spin b { flex: 1; border: 1px solid #fff; border-right: 2px solid #a0a0a0; border-bottom: 2px solid #a0a0a0; display: flex; align-items: center; justify-content: center; }
.su, .sd { border: 4px solid transparent; border-top: 0; border-bottom: 5px solid #000; }
.sd { border-bottom: 0; border-top: 5px solid #000; }
.field { height: 25px; background: #fff; border: 1px solid #fff; border-top: 2px solid #808080; border-left: 2px solid #808080; box-shadow: inset 0 -1px #e3e3e3; display: flex; line-height: 23px; padding-left: 3px; }
.field.ro { background: #f5f5f5; }
.idrow .field { margin-top: 1px; }
.idrow label { line-height: 24px; margin-top: 2px; }
.l-act { width: 45px; margin-left: 91px; margin-right: 8px; }
.f-id { width: 233px; margin-right: 15px; } .f-name { width: 780px; }
.l-proj { width: 42px; margin-left: 118px; margin-right: 9px; }
.f-proj { width: 322px; }
.group { flex: 1; border: 2px solid #a6a6a6; border-bottom: 0; border-right: 1px solid #fff; box-shadow: inset 1px 1px #fff; padding: 9px 0 0 26px; }
.grow { display: flex; }
.item label { display: block; line-height: 18px; height: 21px; font-size: 13.5px; }
.grow.two { margin-top: 9px; }
.item .field { height: 27px; line-height: 23px; }
.w1 { width: 367px; margin-right: 10px; } .w2 { width: 435px; margin-right: 16px; } .w3 { width: 366px; margin-right: 13px; } .w4 { width: 463px; }
.w5 { width: 583px; margin-right: 10px; } .w6 { width: 535px; margin-right: 11px; } .w7 { width: 463px; }
.item .field.pic { height: 26px; padding-left: 0; line-height: 20px; }
.item .field.ro { height: 26px; line-height: 21px; padding-left: 2px; }
.pic svg { width: 22px; height: 19px; margin: 1px 4px 0 0; }
.pic svg.sm { width: 19px; height: 18px; margin: 1px 5px 0 1px; }
.btn { width: 21px; margin: 1px 0 0 auto; background: #efefef; border: 1px solid #fff; border-right: 2px solid #777; border-bottom: 2px solid #777; text-align: center; line-height: 22px; }
.dd { display: flex; align-items: center; justify-content: center; }
.dd i { border: 5px solid transparent; border-top: 6px solid #000; border-bottom: 0; }

/* status bar */
.statusbar { height: 25px; flex: none; background: #efefef; border-top: 1px solid #ddd; border-bottom: 2px solid #b5bcc0; display: flex; padding: 3px 0 0 120px; font: 13.4px/19px "DejaVu Sans Condensed", "DejaVu Sans", sans-serif; letter-spacing: 0; gap: 3px; }
.statusbar span { border: 1px solid #a0a0a0; border-right-color: #fff; border-bottom: 0; padding-left: 1px; }
.s0 { width: 94px; } .s1 { width: 139px; } .s2 { width: 157px; } .s3 { width: 182px; } .s4 { width: 164px; } .s5 { width: 94px; } .s6 { width: 937px; }

/* taskbar */
.taskbar { height: 59px; flex: none; background: #cfe6ed; display: flex; font: 14px/20px "Noto Sans", sans-serif; letter-spacing: -0.4px; color: #111; }
.weather { display: flex; gap: 9px; padding: 9px 0 0 24px; width: 491px; }
.weather svg { margin-top: 5px; }
.dim { color: #555; letter-spacing: -0.1px; }
.dock { display: flex; align-items: center; }
.app { width: 55.1px; height: 48px; display: flex; align-items: center; justify-content: center; position: relative; }
.app:first-child { width: 52px; margin-right: 5px; }
.app.run::after { content: ""; position: absolute; bottom: 1px; left: 24px; width: 7px; height: 4px; border-radius: 2px; background: #7b8a91; }
.app.active::before { content: ""; position: absolute; inset: 0 3.5px; background: #edf6f9; border-radius: 5px; }
.app.active::after { content: ""; position: absolute; bottom: 1px; left: 17px; width: 21px; height: 4px; border-radius: 2px; background: #0f7fa8; }
.app svg { position: relative; }
.search { width: 274px; height: 39px; border-radius: 20px; background: #f0f8fa; box-shadow: 0 1px 1px #a9c2ca; display: flex; align-items: center; padding: 0 10px 0 14px; margin-right: 3px; font-size: 17px; color: #555; }
.search span { margin: 0 auto 0 12px; }
.badge em { position: absolute; top: 1px; right: 6px; width: 22px; height: 21px; border-radius: 11px; background: #0f7fa8; color: #fff; font-size: 13px; line-height: 20px; text-align: center; }
.adobe { width: 29px; height: 28px; border-radius: 5px; background: #001e36; color: #31a8ff; font: bold 15px/27px "Open Sans", sans-serif; text-align: center; letter-spacing: 0; }
.adobe.ai { background: #330000; color: #ff9a00; }
.tray { margin-left: auto; display: flex; align-items: center; padding: 0 27px 1px 0; }
.lang { text-align: center; margin: 0 27px 0 26px; }
.wifi { margin-right: 9px; }
.tray svg + svg + svg { margin-left: 11px; }
.clock { text-align: right; margin: 0 11px 0 22px; }
.date { letter-spacing: .3px; }
```
